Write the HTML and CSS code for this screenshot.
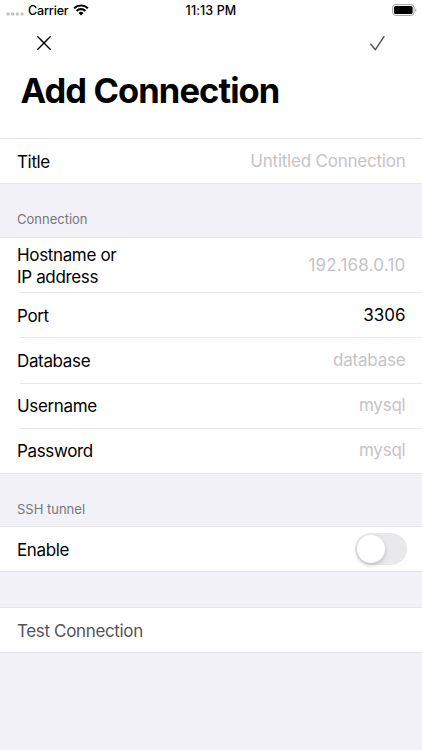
FILE: index.html
```html
<!DOCTYPE html>
<html lang="en">
<head>
    <meta charset="UTF-8">
    <title>Add Connection</title>
    <link rel="stylesheet" href="styles.css">
</head>
<body>
    <header class="header">
        <div class="status-bar">
            <div class="status-left">
                <svg class="signal" width="18" height="4" viewBox="0 0 18 4" fill="#c4c4c4">
                    <circle cx="2" cy="2" r="1.75"/>
                    <circle cx="6.7" cy="2" r="1.75"/>
                    <circle cx="11.4" cy="2" r="1.75"/>
                    <circle cx="16" cy="2" r="1.75"/>
                </svg>
                <span class="carrier">Carrier</span>
                <svg class="wifi" width="16" height="12" viewBox="0 0 16 12">
                    <path d="M1.1 4.2a10 10 0 0 1 13.8 0M3.6 6.9a6.3 6.3 0 0 1 8.8 0" fill="none" stroke="#000" stroke-width="2.1"/>
                    <path d="M8 11.4L5.5 8.9a3.6 3.6 0 0 1 5 0z"/>
                </svg>
            </div>
            <span class="time">11:13 PM</span>
            <svg class="battery" width="26" height="12" viewBox="0 0 26 12">
                <rect x="0.6" y="0.6" width="21.4" height="10.8" rx="3" fill="none" stroke="#a2a2a2"/>
                <rect x="2" y="2" width="18.6" height="8" rx="1.6"/>
                <path d="M23.3 4.2a2 2 0 0 1 0 3.6z" fill="#a2a2a2"/>
            </svg>
        </div>
        <div class="nav">
            <svg width="14" height="14" viewBox="0 0 14 14" fill="none" stroke="#000" stroke-width="1.4" stroke-linecap="round">
                <path d="M0.8 0.8l12.4 12.4M13.2 0.8L0.8 13.2"/>
            </svg>
            <svg width="15" height="15" viewBox="0 0 15 15" fill="none" stroke="#555" stroke-width="1.5" stroke-linecap="round" stroke-linejoin="round">
                <path d="M0.8 8.2l4.6 5.5L14 0.7"/>
            </svg>
        </div>
        <h1>Add Connection</h1>
    </header>

    <div class="group">
        <div class="row"><span class="label">Title</span><span class="value">Untitled Connection</span></div>
    </div>

    <h2>Connection</h2>
    <div class="group">
        <div class="row row-tall"><span class="label">Hostname or<br>IP address</span><span class="value value-host">192.168.0.10</span></div>
        <div class="row"><span class="label">Port</span><span class="value filled">3306</span></div>
        <div class="row"><span class="label">Database</span><span class="value">database</span></div>
        <div class="row"><span class="label">Username</span><span class="value">mysql</span></div>
        <div class="row"><span class="label">Password</span><span class="value">mysql</span></div>
    </div>

    <h2 class="ssh">SSH tunnel</h2>
    <div class="group">
        <div class="row"><span class="label">Enable</span><span class="switch"><span class="knob"></span></span></div>
    </div>

    <div class="group group-test">
        <div class="row"><span class="label test">Test Connection</span></div>
    </div>
</body>
</html>
```

FILE: styles.css
```css
body {
    background-color: #f2f1f7;
    color: #000;
    font-family: Inter, "Liberation Sans", sans-serif;
    font-size: 17px;
    margin: 0;
    height: 750px;
    overflow: hidden;
}

.header {
    background-color: #fff;
    height: 138px;
}

.status-bar {
    display: grid;
    grid-template-columns: 1fr auto 1fr;
    align-items: center;
    height: 20px;
    padding: 0 4px 0 6px;
    font-size: 12.5px;
    font-weight: 500;
}

.status-left {
    display: flex;
    align-items: center;
}

.signal {
    margin: 8px 4px 0 0;
}

.carrier {
    letter-spacing: -0.15px;
}

.time {
    margin-right: 2px;
    letter-spacing: 0.1px;
}

.wifi {
    margin-left: 4px;
}

.battery {
    justify-self: end;
}

.nav {
    display: flex;
    justify-content: space-between;
    align-items: center;
    height: 46px;
    padding: 0 37px;
}

h1 {
    margin: 4px 0 0 20.5px;
    font-size: 34.5px;
    line-height: 42px;
    font-weight: 700;
    letter-spacing: -0.92px;
}

h2 {
    box-sizing: border-box;
    height: 53px;
    margin: 0;
    padding: 27px 17px 0;
    font-size: 13px;
    line-height: 16px;
    font-weight: 400;
    color: #77767b;
}

.ssh {
    height: 52px;
}

.group {
    background-color: #fff;
    border-top: 1px solid #e3e3e6;
    border-bottom: 1px solid #e3e3e6;
}

.group-test {
    margin-top: 35px;
}

.row {
    display: flex;
    justify-content: space-between;
    align-items: center;
    height: 44px;
    padding: 0 17px;
}

.row-tall {
    height: 54px;
}

/* separators start a little right of the labels */
.row + .row {
    background: linear-gradient(#e8e8ea, #e8e8ea) 20px 0 / 100% 1px no-repeat;
    height: 45.25px;
}

.label {
    padding-top: 1px;
    line-height: 22px;
    letter-spacing: -0.35px;
}

.row + .row .label {
    padding-top: 2px;
}

.value {
    color: #c4c4c6;
    letter-spacing: -0.22px;
    margin-right: -0.5px;
}

.value-host {
    letter-spacing: 0.2px;
}

.filled {
    color: #000;
    letter-spacing: 0;
}

.test {
    color: #555;
}

.switch {
    box-sizing: border-box;
    width: 52px;
    height: 32px;
    padding: 2px;
    margin-right: -2px;
    border-radius: 16px;
    background-color: #e9e9eb;
}

.knob {
    display: block;
    width: 28px;
    height: 28px;
    border-radius: 50%;
    background-color: #fff;
    box-shadow: 0 2px 4px rgba(0, 0, 0, 0.2);
}
```
